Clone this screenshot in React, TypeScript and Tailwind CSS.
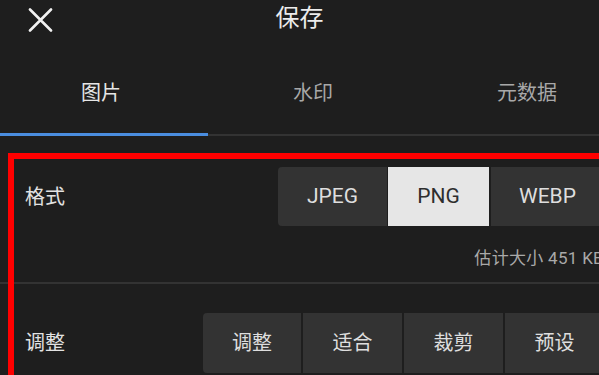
import React from "react";

const cjk = { fontFamily: 'Roboto, "Noto Sans CJK SC", "Noto Sans", sans-serif' };

export default function App() {
  return (
    <div className="relative w-[599px] h-[375px] overflow-hidden bg-[#1e1e1e]" style={cjk}>
      <div className="w-[620px]">
        {/* header */}
        <div className="relative w-[599px] h-[40px] flex items-center">
          <svg className="ml-[28px] shrink-0" width="25" height="24" viewBox="0 0 25 24">
            <path d="M2 1.5 L23 22.5 M23 1.5 L2 22.5" stroke="#f2f2f2" strokeWidth="2.6" strokeLinecap="round" />
          </svg>
          <div className="absolute left-0 right-0 top-[3px] text-center text-[24px] leading-[30px] text-[#ececec]">保存</div>
        </div>
        {/* tabs */}
        <div className="flex h-[93px]">
          <div className="w-[202px] shrink-0 pt-[41px] text-center text-[20px] leading-[24px] text-[#e6e6e6]">图片</div>
          <div className="w-[222px] shrink-0 pt-[41px] text-center text-[20px] leading-[24px] text-[#a8a8a8]">水印</div>
          <div className="w-[206px] shrink-0 pt-[41px] text-center text-[20px] leading-[24px] text-[#a8a8a8]">元数据</div>
        </div>
        <div className="flex h-[3px]">
          <div className="w-[208px] shrink-0 h-[3px] bg-[#4a8ddf]" />
          <div className="flex-1 flex flex-col justify-end">
            <div className="h-[2px] bg-[#333333]" />
          </div>
        </div>
        {/* format row */}
        <div className="pr-[16px]">
          <div className="mt-[31px] flex items-center justify-between pl-[25px]">
            <div className="text-[20px] leading-[26px] text-[#e2e2e2]">格式</div>
            <div className="flex h-[59px] gap-[1px]">
              <div className="w-[109px] rounded-l-[4px] bg-[#333333] flex items-center justify-center text-[21px] text-[#dedede]">JPEG</div>
              <div className="w-[101px] mr-[1px] bg-[#e6e6e6] flex items-center justify-center text-[21px] text-[#2e2e2e]">PNG</div>
              <div className="w-[113px] bg-[#333333] flex items-center justify-center text-[21px] text-[#dedede]">WEBP</div>
            </div>
          </div>
          <div className="mt-[22px] text-right text-[17px] leading-[20px] tracking-[0.3px] text-[#a9a9a9]">估计大小 451 KB</div>
        </div>
        <div className="mt-[14px] h-[2px] bg-[#333333]" />
        {/* adjust row */}
        <div className="pr-[16px]">
          <div className="mt-[29px] flex items-center justify-between pl-[25px]">
            <div className="text-[20px] leading-[26px] text-[#e2e2e2]">调整</div>
            <div className="flex h-[60px] gap-[2px]">
              <div className="w-[98px] rounded-tl-[4px] rounded-bl-[4px] bg-[#333333] flex items-center justify-center text-[20px] text-[#dedede]">调整</div>
              <div className="w-[99px] bg-[#333333] flex items-center justify-center text-[20px] text-[#dedede]">适合</div>
              <div className="w-[99px] bg-[#333333] flex items-center justify-center text-[20px] text-[#dedede]">裁剪</div>
              <div className="w-[99px] bg-[#333333] flex items-center justify-center text-[20px] text-[#dedede]">预设</div>
            </div>
          </div>
        </div>
      </div>
      {/* red annotation box */}
      <div className="absolute left-[8px] top-[153px] w-[640px] h-[300px] border-[6px] border-[#ff0000]" />
    </div>
  );
}
